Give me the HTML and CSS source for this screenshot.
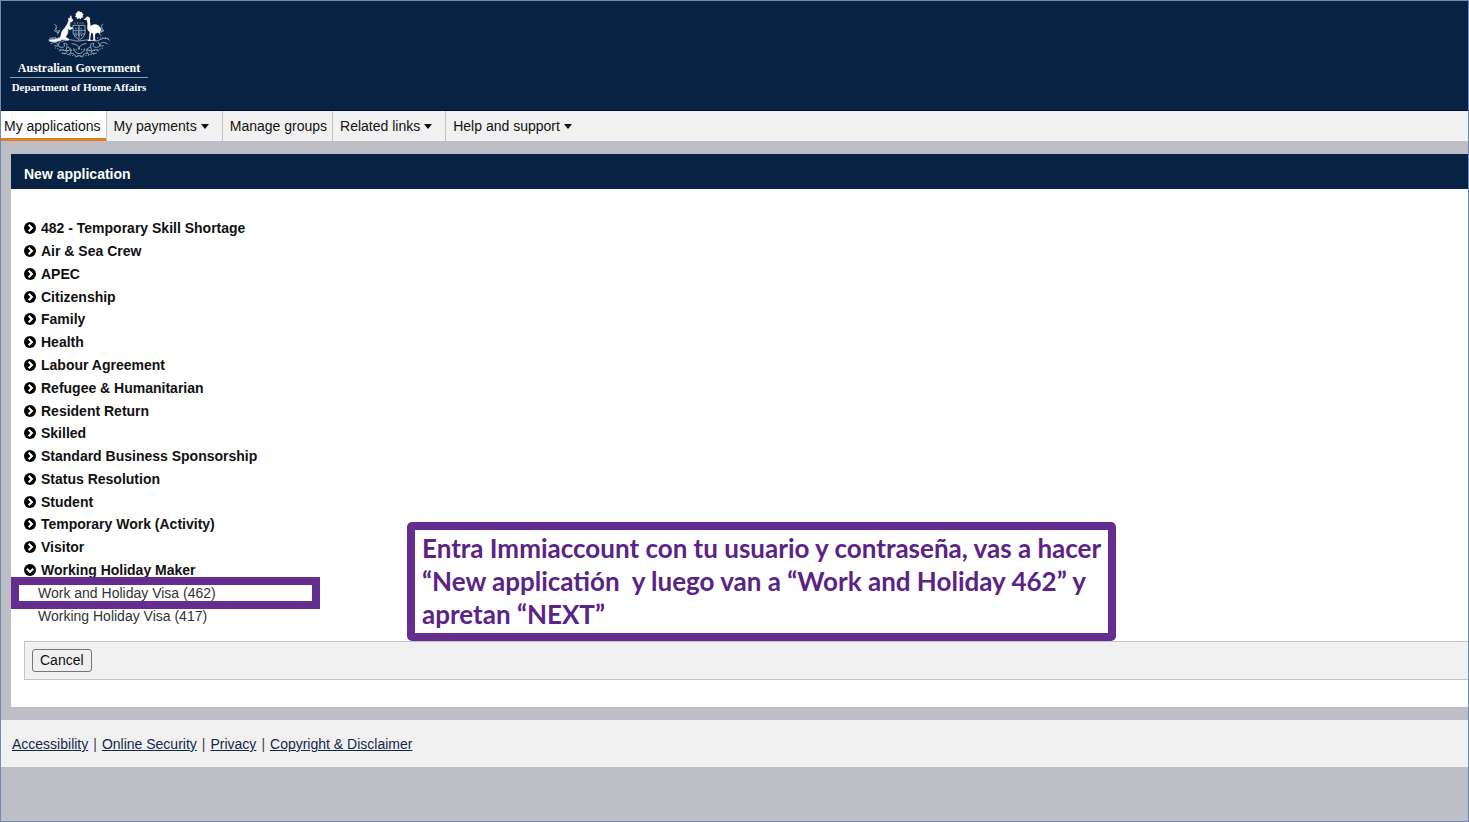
FILE: index.html
```html
<!DOCTYPE html>
<html lang="en">
<head>
<meta charset="utf-8">
<title>New application</title>
<link rel="stylesheet" href="styles.css">
</head>
<body>
<svg class="defs" width="0" height="0" aria-hidden="true">
  <symbol id="closed" viewBox="0 0 12 12"><circle cx="6" cy="6" r="6"/><path d="M4.7 2.8 7.9 6 4.7 9.2" fill="none" stroke="#fff" stroke-width="2.1"/></symbol>
  <symbol id="open" viewBox="0 0 12 12"><circle cx="6" cy="6" r="6"/><path d="M2.8 4.7 6 7.9 9.2 4.7" fill="none" stroke="#fff" stroke-width="2.1"/></symbol>
</svg>
<header class="banner">
  <div class="brand">
    <svg class="crest" viewBox="0 0 192 144" aria-hidden="true">
      <g fill="none" stroke="#8fa1b8" stroke-width="3" stroke-linecap="round">
        <path d="M79 43h35v25q-4 13-17 19-14-7-18-19zM96 44v38M80 58h34M80 69h33"/>
        <path d="M23 39q8 5 4 13t9 9M29 51l-7 8 10 6M38 57l-6 13M168 39q-9 6-3 14t-9 10M160 51l11 8-12 6M153 62l9 12"/>
        <path d="M5 87q15-12 27-2t21 4 22-2 21 3 21-3 22 2 23-4 25 2"/>
        <path d="M12 98q13-8 20 1t-9 5M38 93q-10 16 5 16t7-11q14-4 9 12t12 5M154 93q11 16-5 16t-8-11q-14-4-9 12t-12 5M181 98q-14-8-21 1t9 5"/>
        <path d="M37 119q10-8 20 1t-10 7M62 108q16 5 8 18M75 98q22 2 21 17 0-15 21-17M80 113q4 14 16 15 13-1 17-15M155 119q-10-8-20 1t10 7M130 108q-16 5-9 18M64 130q14-8 20 3M127 130q-14-8-19 3M86 138q10-9 21 0"/>
      </g>
      <g fill="none" stroke="#c3cedb" stroke-width="3" stroke-dasharray="3 5">
        <path d="M8 81h42M142 81h42M24 110q30 16 72 3 42 13 73-3M44 126q27 8 53 10 27-2 52-10M82 36h28M85 52h24M85 63h24M86 74h20"/>
      </g>
      <circle cx="96" cy="11" r="9" fill="#fff"/>
      <path d="m96 0 3 4 5-2 1 5 5 2-3 5 2 5-6 1-2 5-5-3-6 2-1-5-5-2 3-4-2-5 5-2 2-5z" fill="#fff"/>
      <path d="M71 14q3 5 3 9l4 4-3 5-6 1-1 12 4 5 4-1v4l-8 3-5-4-1 15-7 11 10 6-1 4-19-3q-7 6-20 7L8 91l0-4 19-2q12-1 15-11 1-15 11-22l9-14 3-9 0-8 3 3z" fill="#fff" stroke="#fff" stroke-width="2"/>
      <path d="M118 18q4-3 9 1 4 4 2 13l2 13q8-8 20-4 10 4 13 22l-5-5 0 10-7-3-7 3-2 17 7 3-14 1 3-4-1-16-5-4-4 21 7 3-15 1 5-5 2-22q-9-6-7-18 1-12-2-18l-9 0z" fill="#fff"/>
    </svg>
    <span class="gov">Australian Government</span>
    <span class="dept">Department of Home Affairs</span>
  </div>
</header>
<nav class="tabs">
  <a class="tab current" href="#">My applications</a>
  <button class="tab menu" type="button">My payments<i class="caret"></i></button>
  <a class="tab" href="#">Manage groups</a>
  <button class="tab menu" type="button">Related links<i class="caret"></i></button>
  <button class="tab menu" type="button">Help and support<i class="caret"></i></button>
</nav>
<main class="panel">
  <h1>New application</h1>
  <div class="content">
    <ul class="types">
      <li><button type="button"><svg><use href="#closed"/></svg>482 - Temporary Skill Shortage</button></li>
      <li><button type="button"><svg><use href="#closed"/></svg>Air &amp; Sea Crew</button></li>
      <li><button type="button"><svg><use href="#closed"/></svg>APEC</button></li>
      <li><button type="button"><svg><use href="#closed"/></svg>Citizenship</button></li>
      <li><button type="button"><svg><use href="#closed"/></svg>Family</button></li>
      <li><button type="button"><svg><use href="#closed"/></svg>Health</button></li>
      <li><button type="button"><svg><use href="#closed"/></svg>Labour Agreement</button></li>
      <li><button type="button"><svg><use href="#closed"/></svg>Refugee &amp; Humanitarian</button></li>
      <li><button type="button"><svg><use href="#closed"/></svg>Resident Return</button></li>
      <li><button type="button"><svg><use href="#closed"/></svg>Skilled</button></li>
      <li><button type="button"><svg><use href="#closed"/></svg>Standard Business Sponsorship</button></li>
      <li><button type="button"><svg><use href="#closed"/></svg>Status Resolution</button></li>
      <li><button type="button"><svg><use href="#closed"/></svg>Student</button></li>
      <li><button type="button"><svg><use href="#closed"/></svg>Temporary Work (Activity)</button></li>
      <li><button type="button"><svg><use href="#closed"/></svg>Visitor</button></li>
      <li><button type="button" aria-expanded="true"><svg><use href="#open"/></svg>Working Holiday Maker</button></li>
      <li class="sub marked"><a href="#">Work and Holiday Visa (462)</a></li>
      <li class="sub"><a href="#">Working Holiday Visa (417)</a></li>
    </ul>
    <div class="actions"><button class="cancel" type="button">Cancel</button></div>
    <p class="callout">Entra Immiaccount con tu usuario y contraseña, vas a hacer<br>“New applicatión&nbsp; y luego van a “Work and Holiday 462” y<br>apretan “NEXT”</p>
  </div>
</main>
<footer class="footer">
  <a href="#">Accessibility</a><span>|</span><a href="#">Online Security</a><span>|</span><a href="#">Privacy</a><span>|</span><a href="#">Copyright &amp; Disclaimer</a>
</footer>
</body>
</html>
```
FILE: styles.css
```css
*, *::before, *::after { box-sizing: border-box; }
body {
  margin: 0;
  min-height: 100vh;
  border: 1px solid #7488b4;
  background: #bebec6;
  color: #111;
  font: 14px/20px "Liberation Sans", Arial, sans-serif;
}
button { font: inherit; color: inherit; }
a { color: inherit; text-decoration: none; }
.defs { position: absolute; }

.banner { background: #082244; border-bottom: 1px solid #030f28; padding: 10px 9px 14px; }
.brand {
  display: flex;
  flex-direction: column;
  align-items: center;
  width: 138px;
  color: #fff;
  font: bold 11px/18px "Liberation Serif", "Times New Roman", serif;
  white-space: nowrap;
}
.crest { width: 64px; height: 48px; }
.gov { align-self: stretch; text-align: center; border-bottom: 1px solid #8b9bb0; font-size: 12px; }

.tabs { display: flex; height: 30px; background: #f1f1f1; }
.tab {
  padding: 5px 5px 5px 7px;
  border: 0;
  border-left: 1px solid #c2c2c9;
  background: none;
  white-space: nowrap;
}
.tab.menu { padding-right: 13px; }
.tab.current { border-left: 0; border-bottom: 3px solid #e07b20; padding-left: 3px; background: #fff; }
.caret {
  display: inline-block;
  margin-left: 4px;
  border: 4px solid transparent;
  border-top: 5px solid #111;
  border-bottom: 0;
  vertical-align: 2px;
}

.panel { margin: 13px 0 13px 10px; background: #fff; }
.panel h1 {
  margin: 0;
  padding: 10px 13px 5px;
  background: #082244;
  color: #fff;
  font-size: 14px;
  line-height: 20px;
}
.content { position: relative; padding: 28px 0 27px 13px; }
.types {
  display: grid;
  grid-auto-rows: 1fr;
  min-height: 410px;
  margin: 0 0 14px;
  padding: 0;
  list-style: none;
}
.types li { display: flex; align-items: center; }
.types button {
  display: flex;
  align-items: center;
  gap: 5px;
  padding: 0;
  border: 0;
  background: none;
  font-weight: bold;
}
.types svg { width: 12px; height: 12px; }
.types .sub { padding-left: 14px; color: #333; }
.marked { position: relative; }
.marked::after {
  content: "";
  position: absolute;
  left: -13px;
  top: -4px;
  width: 309px;
  height: 32px;
  border: 8px solid #662d91;
}
.actions {
  display: flex;
  padding: 7px;
  border: 1px solid #c4c4c8;
  border-right: 0;
  background: #f1f1f1;
}
.cancel {
  padding: 0 7px;
  border: 1px solid #767676;
  border-radius: 3px;
  background: #efefef;
  line-height: 21px;
}
.callout {
  position: absolute;
  left: 396px;
  bottom: 66px;
  margin: 0;
  width: 709px;
  padding: 2px 7px;
  border: 8px solid #662d91;
  border-radius: 5px;
  background: #fff;
  color: #5a2385;
  font: bold 26px/33px Lato, sans-serif;
  white-space: nowrap;
}

.footer { display: flex; align-items: center; gap: 5px; padding: 14px 11px 13px; background: #f1f1f1; color: #14284b; }
.footer a { text-decoration: underline; }
.footer span { color: #444; }
```
